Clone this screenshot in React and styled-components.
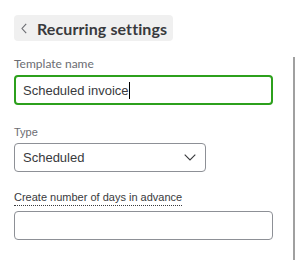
import React from "react";
import styled, { createGlobalStyle } from "styled-components";

const Global = createGlobalStyle`
  html, body { margin: 0; padding: 0; background: #fff; }
  body { width: 295px; height: 260px; overflow: hidden; }
  * { box-sizing: border-box; }
`;

const Page = styled.div`
  display: flex;
  width: 295px;
  height: 260px;
`;

const Content = styled.div`
  flex: 1;
  display: flex;
  flex-direction: column;
  padding: 15px 0 0 14px;
`;

const Scrollbar = styled.div`
  width: 2px;
  margin-top: 57px;
  background: #a0a0a0;
`;

const BackPill = styled.button`
  align-self: flex-start;
  display: flex;
  align-items: center;
  gap: 10px;
  height: 26px;
  width: 159px;
  padding: 0 0 0 7px;
  border: none;
  border-radius: 4px;
  background: #f0f0f0;
  font-family: Lato, "Open Sans", sans-serif;
  font-weight: 700;
  font-size: 16px;
  letter-spacing: 0.1px;
  color: #393a3d;
  cursor: pointer;
`;

const Field = styled.div`
  display: flex;
  flex-direction: column;
  margin-top: ${(p) => p.$mt}px;
`;

const Label = styled.label`
  font-family: ${(p) => (p.$geo ? "Lato, sans-serif" : '"Liberation Sans", Arial, sans-serif')};
  font-size: ${(p) => p.$size}px;
  color: ${(p) => (p.$dark ? "#393a3d" : "#6b6c72")};
  line-height: 14px;
  margin-bottom: ${(p) => p.$mb}px;
  align-self: flex-start;
  ${(p) => p.$dotted && "border-bottom: 1px dotted #393a3d; padding-bottom: 1px;"}
`;

const TextBox = styled.div`
  display: flex;
  align-items: center;
  width: ${(p) => p.$w}px;
  height: ${(p) => p.$h}px;
  padding: 0 0 0 ${(p) => (p.$focus ? 7 : 8)}px;
  border: ${(p) => (p.$focus ? "2px solid #2ca01c" : "1px solid #8d9096")};
  border-radius: 4px;
  font-family: "Liberation Sans", Arial, sans-serif;
  font-size: 13px;
  color: #393a3d;
`;

const Caret = styled.span`
  display: inline-block;
  width: 1px;
  height: 17px;
  background: #000;
`;

const Select = styled(TextBox)`
  justify-content: space-between;
  padding-right: 9px;
`;

export default function App() {
  return (
    <>
      <Global />
      <Page>
        <Content>
          <BackPill>
            <svg width="6" height="11" viewBox="0 0 6 11">
              <path d="M5.2 0.8 L1 5.5 L5.2 10.2" fill="none" stroke="#6b6c72" strokeWidth="1.1" />
            </svg>
            Recurring settings
          </BackPill>

          <Field $mt={16}>
            <Label $geo $size={12} $mb={4}>Template name</Label>
            <TextBox $focus $w={259} $h={30}>
              Scheduled invoice<Caret />
            </TextBox>
          </Field>

          <Field $mt={20}>
            <Label $size={11} $mb={4}>Type</Label>
            <Select $w={192} $h={29}>
              Scheduled
              <svg width="12" height="7" viewBox="0 0 12 7">
                <path d="M0.7 0.7 L6 6 L11.3 0.7" fill="none" stroke="#393a3d" strokeWidth="1.1" />
              </svg>
            </Select>
          </Field>

          <Field $mt={18}>
            <Label $dark $dotted $size={11} $mb={5}>Create number of days in advance</Label>
            <TextBox $w={259} $h={29} />
          </Field>
        </Content>
        <Scrollbar />
      </Page>
    </>
  );
}
